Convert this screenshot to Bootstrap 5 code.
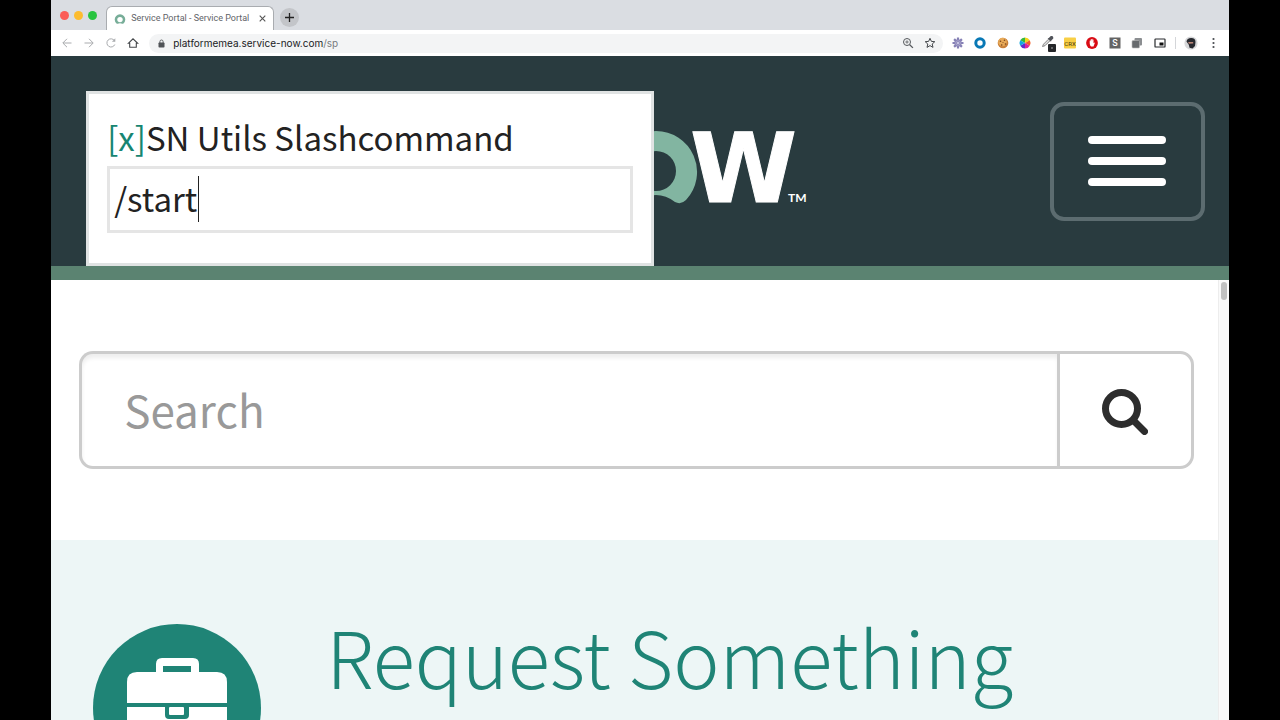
<!DOCTYPE html>
<html lang="en">
<head>
<meta charset="utf-8">
<meta name="viewport" content="width=device-width, initial-scale=1">
<title>Service Portal - Service Portal</title>
<link href="https://cdn.jsdelivr.net/npm/bootstrap@5.3.0/dist/css/bootstrap.min.css" rel="stylesheet">
<style>
  :root { --portal: "Noto Sans CJK JP", "Noto Sans", sans-serif; --teal: #1f8476; --ink: #293b3f; }
  body { background: #000; font-family: var(--portal); color: #222; }
  svg { display: block; flex: none; }
  button.plain { border: 0; background: none; padding: 0; color: inherit; flex: none; }
  .browser { margin: 0 4%; background: #fff; }
  .chrome-ui { font-family: Inter, Roboto, sans-serif; color: #5f6368; }
  .tab-strip { height: 30px; background: #dadde2; padding-left: 9px; }
  .lights { gap: 5px; margin-right: 9px; }
  .lights i { width: 9px; height: 9px; border-radius: 50%; }
  .tab-item { height: 24px; width: 168px; padding: 0 7px; background: #fff; border: 1px solid #a9acb0; border-bottom: 0; border-radius: 6px 6px 0 0; font-family: Roboto, sans-serif; font-size: 9px; }
  .tab-item span { padding-left: 5px; }
  .new-tab { width: 19px; height: 19px; border-radius: 50%; background: #c3c5c9 !important; color: #333; margin: 5px 0 0 6px; }
  .tool-row { height: 26px; padding: 0 9px 0 10px; }
  .nav-icons { gap: 10px; width: 88px; }
  .omnibox { height: 19px; border-radius: 10px; background: #f3f4f5; padding: 0 7px 0 5px; }
  .box-actions { gap: 10px; }
  .url { font-size: 10px; color: #202124; text-decoration: none; line-height: 18px; }
  .url span { color: #777b80; }
  .extensions { width: 216px; margin-left: 8px; }
  .divider { width: 1px; height: 12px; background: #d4d6d9; }
  .portal-head { height: 224px; background: var(--ink); border-bottom: 14px solid #5b8371; padding: 0 24px 0 35px; }
  .brand { margin-left: 522px; }
  .menu-btn { width: 155px; height: 119px; border: 4px solid #5c6c70; border-radius: 14px; background: none; gap: 13px; }
  .menu-btn i { width: 78px; height: 8px; border-radius: 4px; background: #fff; }
  .slash { position: absolute; left: 35px; top: 35px; width: 568px; height: 175px; background: #fff; border: 3px solid #e0e3e3; padding: 17px 18px; }
  .slash label { font-size: 33px; line-height: 52px; display: block; }
  .slash a { color: #178572; text-decoration: none; }
  .slash input { width: 100%; height: 67px; border: 3px solid #e5e5e5; border-radius: 0; padding: 0 4px 4px; font-size: 33px; color: #222; outline: 0; margin-top: 3px; }
  .caret { position: absolute; left: 109px; top: 82px; width: 1px; height: 46px; background: #222; }
  .search-area { padding: 71px 24px 71px 28px; }
  .search-area .form-control { height: 118px; border: 3px solid #ccc; border-right: 0; border-radius: 14px 0 0 14px; padding: 0 42px 2px; font-size: 44px; box-shadow: inset 0 4px 4px #eee; }
  .search-area .form-control::placeholder { color: #999; }
  .search-area .btn { width: 137px; border: 3px solid #ccc; border-radius: 0 14px 14px 0; background: #fff; padding-top: 9px; }
  .track { width: 11px; background: #fafafa; border-left: 1px solid #ededed; flex: none; padding: 2px; }
  .track i { display: block; height: 18px; border-radius: 3px; background: #c1c1c1; }
  .request { background: #edf6f6; padding: 84px 42px; gap: 65px; min-height: 336px; }
  .request h2 { font-size: 78px; line-height: 80px; font-weight: 300; margin: -9px 0 0; color: var(--teal); }
  .request h2 a { color: inherit; text-decoration: none; }
</style>
</head>
<body class="overflow-hidden vh-100">
<div class="browser vh-100 overflow-hidden">
  <div class="chrome-ui">
    <div class="tab-strip d-flex align-items-center">
      <div class="lights d-flex"><i style="background:#fb5c57"></i><i style="background:#fcbc2f"></i><i style="background:#28c440"></i></div>
      <div class="tab-item d-flex align-items-center align-self-end">
        <svg width="12" height="12" viewBox="0 0 12 12"><path d="M3.200 9.800A4.300 4.300 0 1 1 8.800 9.800Q6 8.600 3.200 9.800z" fill="#77ad98" stroke="#77ad98" stroke-width="2" stroke-linejoin="round"/><circle cx="6" cy="6.600" r="2.700" fill="#fff"/></svg>
        <span class="flex-grow-1 text-nowrap">Service Portal - Service Portal</span>
        <button class="plain" aria-label="Close tab"><svg width="7" height="7" viewBox="0 0 7 7" stroke="#555" stroke-width="1.100"><path d="M.7.7l5.600 5.600M6.300.7L.7 6.300"/></svg></button>
      </div>
      <button class="plain new-tab d-flex align-items-center justify-content-center" aria-label="New tab"><svg width="9" height="9" viewBox="0 0 9 9" stroke="#222" stroke-width="1.300"><path d="M4.500 0v9M0 4.500h9"/></svg></button>
    </div>
    <div class="tool-row d-flex align-items-center">
      <div class="nav-icons d-flex align-items-center">
        <button class="plain" aria-label="Back"><svg width="12" height="12" viewBox="0 0 12 12" fill="none" stroke="#a9abae"><path d="M10.500 6H2M6 1.800L1.800 6 6 10.200"/></svg></button>
        <button class="plain" aria-label="Forward"><svg width="12" height="12" viewBox="0 0 12 12" fill="none" stroke="#a9abae"><path d="M1.500 6H10M6 1.800L10.200 6 6 10.200"/></svg></button>
        <button class="plain" aria-label="Reload"><svg width="12" height="12" viewBox="0 0 12 12" fill="none" stroke="#a9abae"><path d="M9.800 7.500A4.100 4.100 0 1 1 9.400 3.600"/><path d="M10.300 1.300v3.400H6.900z" fill="#a9abae" stroke="none"/></svg></button>
        <button class="plain" aria-label="Home"><svg width="12" height="12" viewBox="0 0 12 12" fill="none" stroke="#45484b" stroke-width="1.100"><path d="M1.300 6.300L6 1.800l4.700 4.500H9.300v4H2.700v-4z"/></svg></button>
      </div>
      <div class="omnibox d-flex align-items-center flex-grow-1">
        <svg class="mx-1" width="7" height="9" viewBox="0 0 7 9"><rect x=".5" y="3.500" width="6" height="5" rx=".8" fill="#505357"/><path d="M1.900 4V2.600a1.600 1.600 0 0 1 3.200 0V4" fill="none" stroke="#505357" stroke-width=".9"/></svg>
        <a class="url flex-grow-1 ms-1" href="#">platformemea.service-now.com<span>/sp</span></a>
        <div class="box-actions d-flex">
          <button class="plain" aria-label="Zoom"><svg width="12" height="12" viewBox="0 0 12 12" fill="none" stroke="#55585c"><circle cx="5" cy="5" r="3.500"/><path d="M7.700 7.700l3.200 3.200" stroke-width="1.300"/><path d="M3.300 5h3.400M5 3.300v3.400" stroke-width=".8"/></svg></button>
          <button class="plain" aria-label="Bookmark"><svg width="12" height="12" viewBox="0 0 12 12" fill="none" stroke="#44474b"><path d="M6 1.300l1.400 3.100 3.400.3-2.600 2.300.8 3.400-3-1.800-3 1.800.8-3.400L1.200 4.700l3.400-.3z"/></svg></button>
        </div>
      </div>
      <div class="extensions d-flex align-items-center justify-content-between">
        <svg width="14" height="14" viewBox="0 0 14 14" fill="none" stroke="#8580b5"><g stroke-width="2.200"><path d="M7 1.500v11M1.500 7h11M3.100 3.100l7.800 7.800M10.900 3.100l-7.800 7.800"/></g><circle cx="7" cy="7" r="3.300" fill="#a9a5cc"/><circle cx="7" cy="7" r="1.500" fill="#dcdaf0" stroke-width=".8"/></svg>
        <svg width="14" height="14" viewBox="0 0 14 14"><circle cx="7" cy="7" r="4.200" fill="#fff" stroke="#0878b5" stroke-width="3"/></svg>
        <svg width="14" height="14" viewBox="0 0 14 14"><circle cx="7" cy="7" r="5.300" fill="#c9803a"/><circle cx="6.500" cy="6" r="4.300" fill="#e8aa58"/><g fill="#74411e"><circle cx="4.500" cy="5.200" r=".8"/><circle cx="8.500" cy="4.300" r=".8"/><circle cx="9.500" cy="8" r=".8"/><circle cx="5.700" cy="9" r=".8"/><circle cx="7" cy="6.600" r=".5"/></g></svg>
        <svg width="14" height="14" viewBox="0 0 14 14"><path fill="#35b83f" d="M7 7L7 1.500a5.500 5.500 0 0 0-4.800 2.800z"/><path fill="#f5d51e" d="M7 7V1.500a5.500 5.500 0 0 1 4.800 2.800z"/><path fill="#f2602a" d="M7 7l4.800-2.700a5.500 5.500 0 0 1 0 5.400z"/><path fill="#e0249a" d="M7 7l4.800 2.700A5.500 5.500 0 0 1 7 12.500z"/><path fill="#5a2fd0" d="M7 7v5.500a5.500 5.500 0 0 1-4.800-2.800z"/><path fill="#15a8e0" d="M7 7L2.200 9.700a5.500 5.500 0 0 1 0-5.400z"/></svg>
        <svg width="14" height="18" viewBox="0 0 14 18" overflow="visible"><path d="M1.500 12.500l1-2.300 5-5 1.500 1.500-5 5z" fill="#ddd" stroke="#888"/><path d="M6.600 4.300l1.200-.4 2-2 1.500.2.900.9.100 1.400-2 2-.3 1.400z" fill="#51545a"/><rect x="7" y="10" width="8" height="8" rx="1" fill="#242629"/><circle cx="11" cy="14" r=".7" fill="#ddd"/></svg>
        <svg width="14" height="14" viewBox="0 0 14 14"><rect x="1" y="1.500" width="12" height="11" rx="1" fill="#f8cf45"/><text x="7" y="9.500" text-anchor="middle" font-size="6" font-family="Roboto, sans-serif" fill="#44360e">CRX</text></svg>
        <svg width="14" height="14" viewBox="0 0 14 14"><circle cx="7" cy="7" r="5.900" fill="#d90b14"/><path d="M4.700 7.500V4.800q.5-.7.800 0V6l.2-2.600q.5-.6.800 0V6l.2-3q.5-.6.800 0V6l.2-2.300q.5-.6.800 0v3.500l.8-.7q.6 0 .5.500L8.500 10.400H6Q4.800 9.500 4.700 7.500z" fill="#fff"/></svg>
        <svg width="14" height="14" viewBox="0 0 14 14"><rect x="1.500" y="1.500" width="11" height="11" fill="#646464"/><text x="7" y="10" text-anchor="middle" font-size="9" font-weight="500" font-family="Roboto, sans-serif" fill="#fff">S</text></svg>
        <svg width="14" height="14" viewBox="0 0 14 14"><rect x="4.500" y="2" width="7.500" height="7.500" rx="1" fill="#8b8e91"/><rect x="2" y="4.500" width="7.500" height="7.500" rx="1" fill="#686b6e" stroke="#bbb" stroke-width=".6"/></svg>
        <svg width="14" height="14" viewBox="0 0 14 14"><rect x="2" y="3" width="10" height="8" rx=".6" fill="#fff" stroke="#292b2e" stroke-width="1.200"/><rect x="6.500" y="6.500" width="4" height="3" fill="#111"/></svg>
      </div>
      <span class="divider ms-2 me-2"></span>
      <button class="plain" aria-label="Profile"><svg width="14" height="14" viewBox="0 0 14 14"><circle cx="7" cy="7" r="6.600" fill="#d7d8da"/><path d="M2.500 5.500Q3 2 7.200 2q4.300.2 4.300 4L11 10l-2.500 2.600-3-.8-.7-3z" fill="#27292f"/><path d="M4.200 6h5v1.500l-4.500.2z" fill="#b98678"/></svg></button>
      <button class="plain ms-2" aria-label="Browser menu"><svg width="14" height="14" viewBox="0 0 14 14" fill="#494c50"><circle cx="7.500" cy="3" r="1.100"/><circle cx="7.500" cy="7" r="1.100"/><circle cx="7.500" cy="11" r="1.100"/></svg></button>
    </div>
  </div>

  <header class="portal-head position-relative d-flex align-items-center justify-content-between">
    <a class="brand" href="#" aria-label="Portal home">
      <svg width="210" height="150" viewBox="0 0 210 150">
        <path d="M48 45a41 41 0 0 1 30 69q-5 5-11 2-9-7-19-7t-19 7q-6 3-11-2A41 41 0 0 1 48 45zm0 20a20 20 0 1 0 0 40 20 20 0 0 0 0-40z" fill="#82b5a1"/>
        <text x="82" y="116" font-family="DejaVu Sans, sans-serif" font-weight="700" font-size="97" fill="#fff" stroke="#fff">W</text>
        <text x="180" y="116" font-family="Lato, sans-serif" font-weight="700" font-size="12" fill="#fff">TM</text>
      </svg>
    </a>
    <button class="menu-btn d-flex flex-column align-items-center justify-content-center" aria-label="Toggle navigation"><i></i><i></i><i></i></button>
    <div class="slash">
      <label for="cmd"><a href="#">[x]</a>SN Utils Slashcommand</label>
      <input id="cmd" type="text" value="/start" spellcheck="false">
      <span class="caret"></span>
    </div>
  </header>

  <div class="d-flex">
    <main class="flex-grow-1">
      <form class="search-area" role="search">
        <div class="input-group">
          <input class="form-control" type="search" placeholder="Search" aria-label="Search">
          <button class="btn d-flex align-items-center justify-content-center" type="button" aria-label="Submit search">
            <svg width="46" height="46" viewBox="0 0 46 46" fill="none" stroke="#2d2d2d"><circle cx="19.500" cy="19.500" r="16" stroke-width="7"/><path d="M31.500 31.500L42.500 42.500" stroke-width="7" stroke-linecap="round"/></svg>
          </button>
        </div>
      </form>
      <section class="request d-flex align-items-start">
        <svg width="168" height="168" viewBox="0 0 168 168">
          <circle cx="84" cy="84" r="84" fill="#1f8476"/>
          <path d="M34 79V58q0-10 10-10h19v-8q0-6 6-6h31q6 0 6 6v8h18q10 0 10 10v21zM70 42v6h28v-6z" fill="#fff" fill-rule="evenodd"/>
          <path d="M34 83h38v8q0 4 4 4h16q4 0 4-4v-8h38v34q0 9-9 9H43q-9 0-9-9z" fill="#fff"/>
          <rect x="76" y="83" width="15" height="8" rx="1" fill="#fff"/>
        </svg>
        <h2><a href="#">Request Something</a></h2>
      </section>
    </main>
    <div class="track"><i></i></div>
  </div>
</div>
<script src="https://cdn.jsdelivr.net/npm/bootstrap@5.3.0/dist/js/bootstrap.bundle.min.js"></script>
</body>
</html>
